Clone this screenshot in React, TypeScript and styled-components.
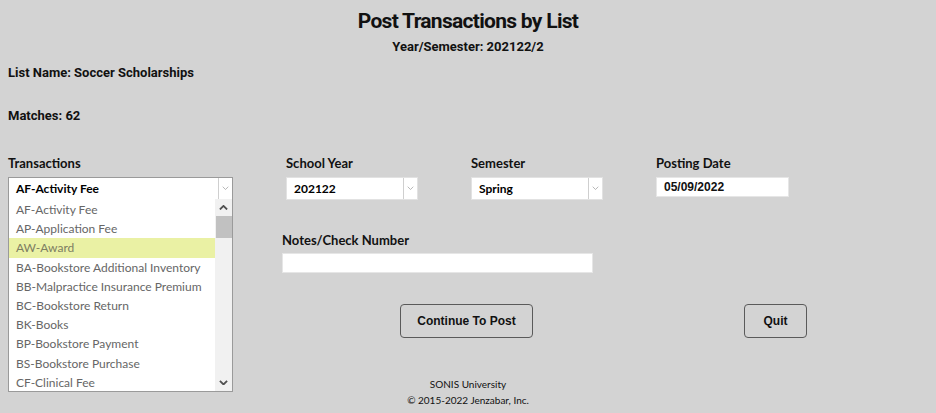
import React from 'react'
import styled, { createGlobalStyle } from 'styled-components'

const GlobalStyle = createGlobalStyle`
  body {
    margin: 0;
    background: #d3d3d3;
    font-family: 'Lato', 'Liberation Sans', sans-serif;
    color: #111;
  }
`

const transactions = [
  'AF-Activity Fee',
  'AP-Application Fee',
  'AW-Award',
  'BA-Bookstore Additional Inventory',
  'BB-Malpractice Insurance Premium',
  'BC-Bookstore Return',
  'BK-Books',
  'BP-Bookstore Payment',
  'BS-Bookstore Purchase',
  'CF-Clinical Fee',
]

const Page = styled.div`
  padding: 8px 8px 0;
  height: 405px;
  overflow: hidden;
`

const Title = styled.h1`
  margin: 0;
  text-align: center;
  font-family: 'Roboto', sans-serif;
  font-size: 21px;
  letter-spacing: -0.7px;
  line-height: 26px;
  font-weight: 700;
`

const SubTitle = styled.div`
  margin-top: 4px;
  text-align: center;
  font-family: 'Roboto', sans-serif;
  font-size: 13px;
  line-height: 18px;
  font-weight: 700;
`

const InfoLine = styled.div<{ $gap: number }>`
  margin-top: ${(p) => p.$gap}px;
  font-family: 'Roboto', sans-serif;
  font-size: 13px;
  line-height: 18px;
  font-weight: 700;
`

const FormGrid = styled.div`
  margin-top: 29px;
  display: grid;
  grid-template-columns: 225px 132px 132px 133px;
  column-gap: 53px;
  align-items: start;
`

const Field = styled.div`
  display: flex;
  flex-direction: column;
  gap: 5px;
`

const Label = styled.label`
  font-size: 13px;
  line-height: 18px;
  font-weight: 700;
`

const SelectBox = styled.div<{ $dark?: boolean }>`
  position: relative;
  display: flex;
  height: 23px;
  box-sizing: border-box;
  background: #fff;
  border: 1px solid ${(p) => (p.$dark ? '#9a9a9a' : '#e2e2e2')};
  font-size: 12px;
  font-weight: 700;
`

const SelectValue = styled.div`
  flex: 1;
  display: flex;
  align-items: center;
  padding-left: 7px;
  color: #000;
`

const ArrowCell = styled.div`
  width: 13px;
  border-left: 1px solid #cfcfcf;
  display: flex;
  align-items: center;
  justify-content: center;
  color: #999;
`

const Dropdown = styled.div`
  position: absolute;
  top: 100%;
  left: -1px;
  width: 225px;
  height: 193px;
  box-sizing: border-box;
  background: #fff;
  border: 1px solid #9a9a9a;
  border-top: none;
  display: flex;
  z-index: 2;
`

const OptionList = styled.div`
  flex: 1;
  padding-top: 1px;
`

const Option = styled.div<{ $active?: boolean }>`
  height: 19.2px;
  display: flex;
  align-items: center;
  padding-left: 7px;
  font-size: 12px;
  font-weight: 400;
  color: ${(p) => (p.$active ? '#7d7d62' : '#666')};
  background: ${(p) => (p.$active ? '#eaf1a4' : 'transparent')};
  white-space: nowrap;
`

const Scrollbar = styled.div`
  width: 17px;
  background: #f1f1f1;
  display: flex;
  flex-direction: column;
`

const ScrollArrow = styled.div`
  height: 17px;
  display: flex;
  align-items: center;
  justify-content: center;
  color: #505050;
`

const Thumb = styled.div`
  height: 22px;
  margin: 0 0 0 1px;
  background: #c1c1c1;
`

const ScrollTrack = styled.div`
  flex: 1;
`

const TextInput = styled.div<{ $width: number }>`
  width: ${(p) => p.$width}px;
  height: 20px;
  box-sizing: border-box;
  background: #fff;
  border: 1px solid #e6e6e6;
  display: flex;
  align-items: center;
  padding-left: 7px;
  font-family: 'Liberation Sans', Arial, sans-serif;
  font-size: 12px;
  font-weight: 700;
`

const NotesField = styled(Field)`
  grid-column: 2 / 4;
  margin-top: 31px;
  margin-left: -4px;
  gap: 4px;
`

const ButtonRow = styled.div`
  display: flex;
  margin-top: 31px;
  padding-left: 392px;
  gap: 211px;
`

const Button = styled.button<{ $width: number }>`
  width: ${(p) => p.$width}px;
  height: 34px;
  background: transparent;
  border: 1px solid #5a5a5a;
  border-radius: 4px;
  font-family: 'Liberation Sans', Arial, sans-serif;
  font-size: 12px;
  font-weight: 700;
  color: #111;
`

const Footer = styled.footer`
  margin-top: 38px;
  text-align: center;
  font-size: 10px;
  line-height: 16px;
  color: #111;
`

const Chevron = ({ up, size = 9, stroke = 2 }: { up?: boolean; size?: number; stroke?: number }) => (
  <svg width={size} height={size * 0.6} viewBox="0 0 10 6">
    <path
      d={up ? 'M1 5 L5 1 L9 5' : 'M1 1 L5 5 L9 1'}
      fill="none"
      stroke="currentColor"
      strokeWidth={stroke}
    />
  </svg>
)

const App: React.FC = () => {
  return (
    <>
      <GlobalStyle />
      <Page>
        <Title>Post Transactions by List</Title>
        <SubTitle>Year/Semester: 202122/2</SubTitle>
        <InfoLine $gap={8}>List Name: Soccer Scholarships</InfoLine>
        <InfoLine $gap={25}>Matches: 62</InfoLine>

        <FormGrid>
          <Field>
            <Label>Transactions</Label>
            <SelectBox $dark>
              <SelectValue>AF-Activity Fee</SelectValue>
              <ArrowCell>
                <Chevron size={7} stroke={1} />
              </ArrowCell>
              <Dropdown>
                <OptionList>
                  {transactions.map((t) => (
                    <Option key={t} $active={t === 'AW-Award'}>
                      {t}
                    </Option>
                  ))}
                </OptionList>
                <Scrollbar>
                  <ScrollArrow>
                    <Chevron up />
                  </ScrollArrow>
                  <Thumb />
                  <ScrollTrack />
                  <ScrollArrow>
                    <Chevron />
                  </ScrollArrow>
                </Scrollbar>
              </Dropdown>
            </SelectBox>
          </Field>
          <Field>
            <Label>School Year</Label>
            <SelectBox>
              <SelectValue>202122</SelectValue>
              <ArrowCell>
                <Chevron size={7} stroke={1} />
              </ArrowCell>
            </SelectBox>
          </Field>
          <Field>
            <Label>Semester</Label>
            <SelectBox>
              <SelectValue>Spring</SelectValue>
              <ArrowCell>
                <Chevron size={7} stroke={1} />
              </ArrowCell>
            </SelectBox>
          </Field>
          <Field>
            <Label>Posting Date</Label>
            <TextInput $width={133}>05/09/2022</TextInput>
          </Field>

          <NotesField>
            <Label>Notes/Check Number</Label>
            <TextInput $width={311} />
          </NotesField>
        </FormGrid>

        <ButtonRow>
          <Button $width={133}>Continue To Post</Button>
          <Button $width={63}>Quit</Button>
        </ButtonRow>

        <Footer>
          SONIS University
          <br />© 2015-2022 Jenzabar, Inc.
        </Footer>
      </Page>
    </>
  )
}

export default App
